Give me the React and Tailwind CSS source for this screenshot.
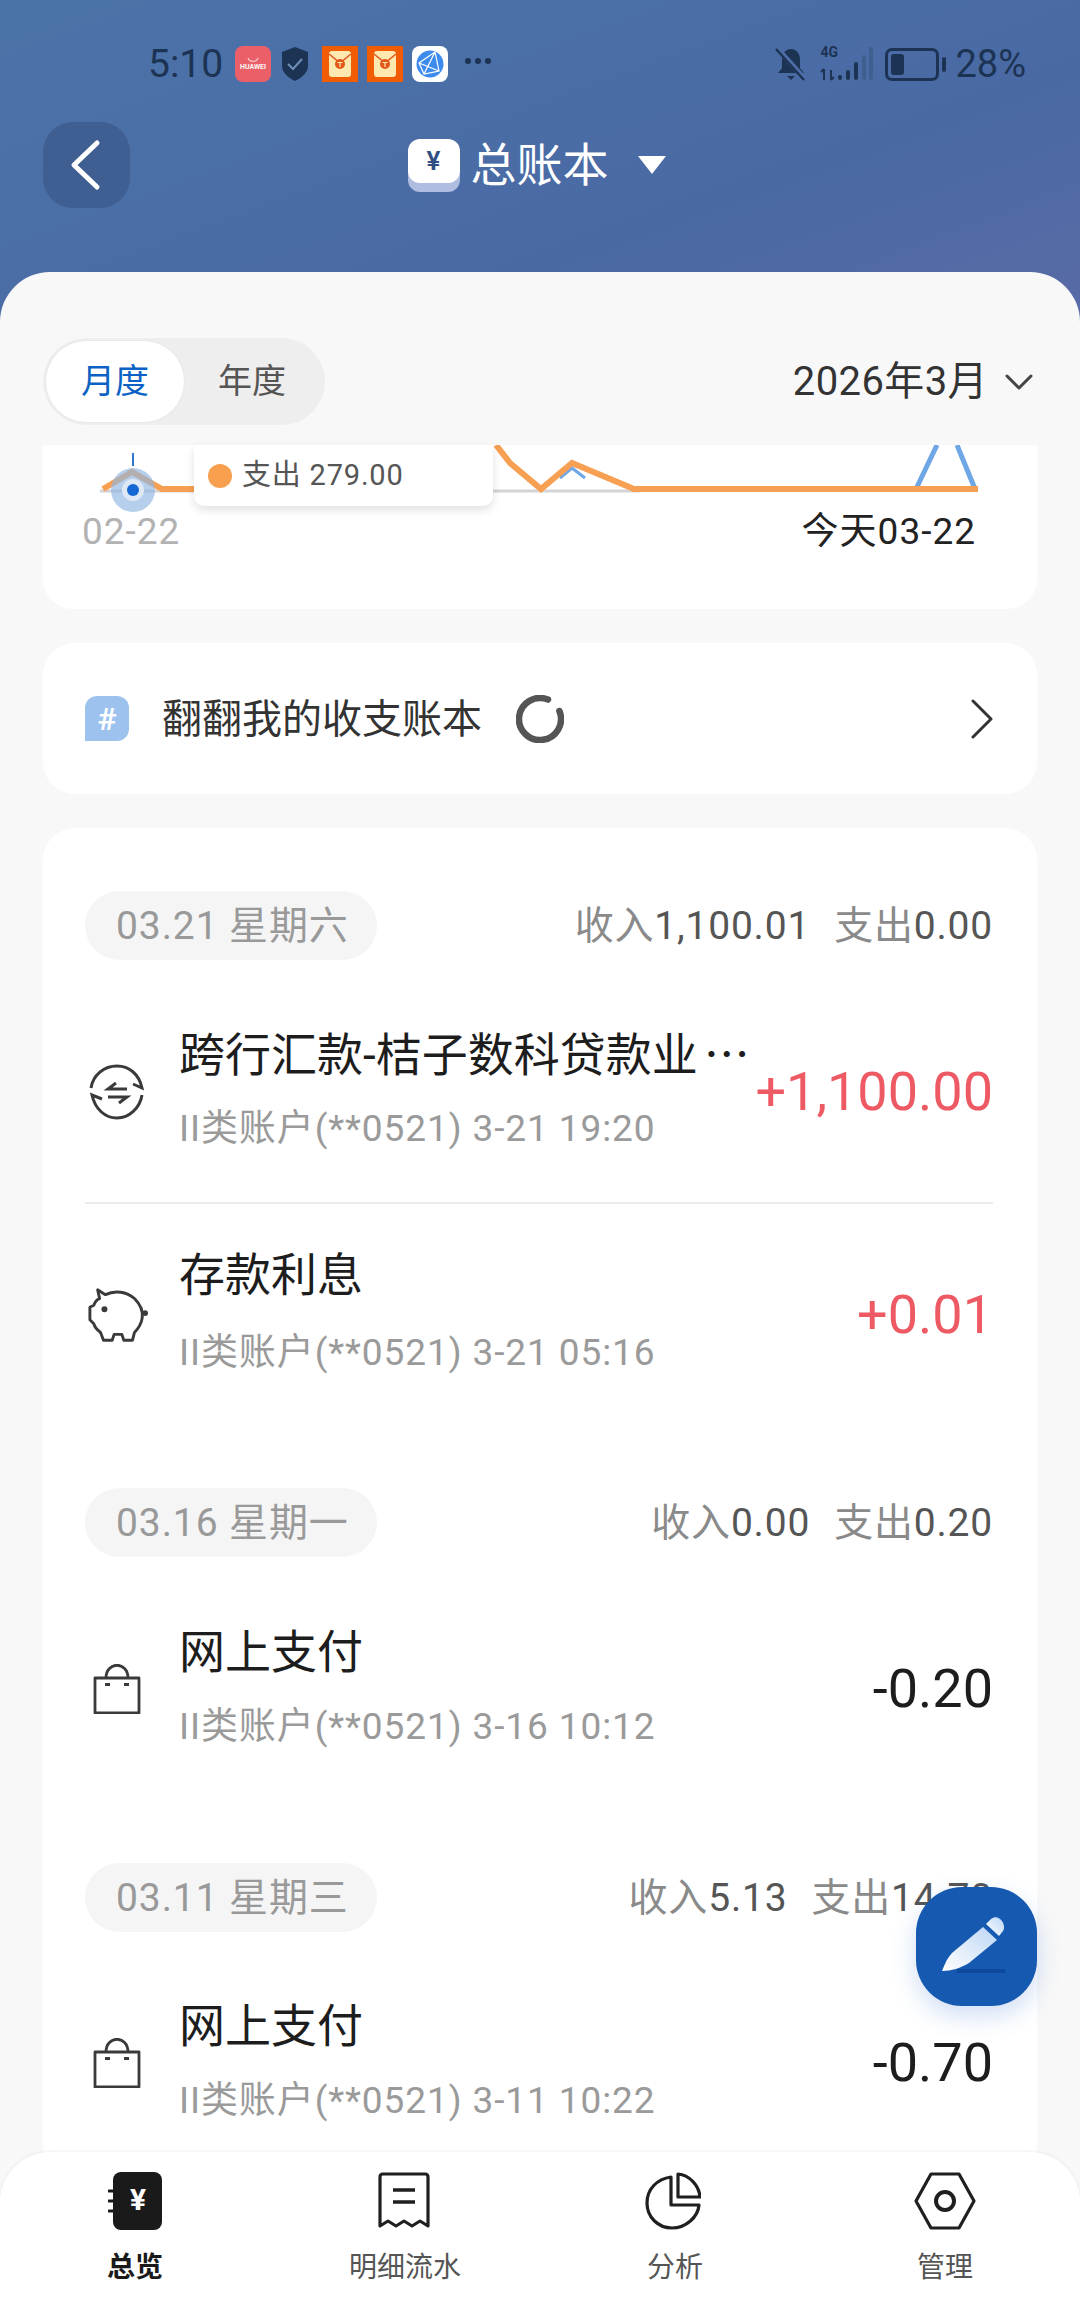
import React from "react";

const FONT = { fontFamily: 'Roboto, "Noto Sans CJK SC", sans-serif' };

function RedPacket() {
  return (
    <svg width="36" height="36" viewBox="0 0 36 36">
      <rect width="36" height="36" fill="#f25c05" />
      <rect x="7" y="5" width="22" height="26" rx="3" fill="#fde9b0" />
      <path d="M7 8 L18 17 L29 8" fill="none" stroke="#e2571a" strokeWidth="1.6" />
      <circle cx="18" cy="18" r="5" fill="#e2571a" />
      <path d="M15.5 16.5h5M18 16.5v4.5" stroke="#fde9b0" strokeWidth="1.2" />
    </svg>
  );
}

function StatusBar() {
  const dark = "#1c3354";
  return (
    <div className="h-[122px] flex items-start justify-between pt-[44px] pl-[148px] pr-[54px]">
      <div className="flex items-center h-[40px]">
        <span className="text-[39px] leading-none w-[87px] text-[#1c3354]">5:10</span>
        <div className="w-[36px] h-[36px] rounded-[8px] bg-[#ea5f68] flex flex-col items-center justify-center mr-[9px]">
          <svg width="14" height="6" viewBox="0 0 14 6"><path d="M2 1c1.5 4.5 8.5 4.5 10 0" fill="none" stroke="#f8c4c8" strokeWidth="1.2" /></svg>
          <span className="text-[7px] leading-[9px] text-white font-semibold">HUAWEI</span>
        </div>
        <svg width="30" height="36" viewBox="0 0 30 36" className="mr-[12px]">
          <path d="M15 1 L28 6 V20 C28 27 21 32 15 35 C9 32 2 27 2 20 V6 Z" fill={dark} />
          <path d="M8 18l5 5 9-10" fill="none" stroke="#6f8fb8" strokeWidth="2" />
        </svg>
        <div className="mr-[9px]"><RedPacket /></div>
        <div className="mr-[9px]"><RedPacket /></div>
        <div className="w-[36px] h-[36px] rounded-[8px] bg-white flex items-center justify-center mr-[17px]">
          <svg width="30" height="30" viewBox="0 0 30 30">
            <circle cx="15" cy="15" r="13.5" fill="#3d8bec" />
            <path d="M4 14 L20 3 L24 22 L9 25 Z M4 14 L24 22 M20 3 L9 25" fill="none" stroke="#fff" strokeWidth="1.2" />
          </svg>
        </div>
        <span className="flex gap-[4px] items-center -mt-[6px]">
          <i className="w-[6px] h-[6px] rounded-full bg-[#1c3354]" />
          <i className="w-[6px] h-[6px] rounded-full bg-[#1c3354]" />
          <i className="w-[6px] h-[6px] rounded-full bg-[#1c3354]" />
        </span>
      </div>
      <div className="flex items-center h-[40px]">
        <svg width="36" height="36" viewBox="0 0 34 36" className="mr-[11px]">
          <path d="M17 3c6 0 9 5 9 11v8l4 5H4l4-5v-8c0-6 3-11 9-11Z" fill={dark} />
          <path d="M13 30h8l-4 4Z" fill={dark} />
          <path d="M3 2 L31 33" stroke="#4c6da5" strokeWidth="5" />
          <path d="M2 3 L30 34" stroke={dark} strokeWidth="2.4" />
        </svg>
        <div className="relative w-[52px] h-[36px] mr-[13px]">
          <span className="absolute left-0 top-[-2px] text-[14px] leading-[16px] font-bold text-[#1c3354]">4G</span>
          <svg width="54" height="36" viewBox="0 0 54 36" className="absolute inset-0">
            <path d="M4 34V23M1 26l3-3M11 24v10M11 34l3-3" stroke={dark} strokeWidth="2" fill="none" />
            <rect x="18" y="29" width="4" height="5" rx="2" fill={dark} />
            <rect x="26" y="24" width="4" height="10" rx="2" fill={dark} />
            <rect x="34" y="16" width="4" height="18" rx="2" fill={dark} />
            <rect x="42" y="9" width="4" height="25" rx="2" fill="#3f5f8f" />
            <rect x="49" y="1" width="4" height="33" rx="2" fill="#3f5f8f" />
          </svg>
        </div>
        <div className="w-[54px] h-[33px] rounded-[7px] border-[3px] border-[#1c3354] p-[3px] mr-[3px]">
          <div className="w-[13px] h-full rounded-[3px] bg-[#1c3354]" />
        </div>
        <div className="w-[4px] h-[15px] rounded-[2px] bg-[#1c3354] mr-[9px]" />
        <span className="text-[38px] leading-none text-[#1c3354]">28%</span>
      </div>
    </div>
  );
}

function TitleBar() {
  return (
    <div className="relative h-[86px] flex items-center justify-center">
      <div className="absolute left-[43px] top-0 w-[87px] h-[86px] rounded-[30px] bg-[#3f5e92] flex items-center justify-center">
        <svg width="34" height="52" viewBox="0 0 34 52" fill="none" stroke="#fff" strokeWidth="5" strokeLinecap="round" strokeLinejoin="round" className="-ml-[4px]">
          <path d="M29 4 L6 26 L29 48" />
        </svg>
      </div>
      <div className="flex items-center -ml-[6px]">
        <div className="relative w-[52px] h-[52px] mr-[11px]">
          <div className="absolute left-0 right-0 top-[6px] bottom-[-1px] rounded-[12px] bg-[#aebde0]" />
          <div className="absolute inset-x-0 top-0 h-[44px] rounded-[12px] bg-white flex items-center justify-center text-[#2f4f82] text-[26px] font-semibold leading-none">
            ¥
          </div>
        </div>
        <span className="text-[46px] leading-none text-white">总账本</span>
        <svg width="30" height="20" viewBox="0 0 30 20" className="ml-[28px]">
          <path d="M1 1h28L15 19Z" fill="#fff" />
        </svg>
      </div>
    </div>
  );
}

function Toolbar() {
  return (
    <div className="flex items-center justify-between pl-[43px] pr-[46px] h-[87px]">
      <div className="relative w-[282px] h-[87px] rounded-full bg-[#eeeeee] flex items-center">
        <div className="w-[140px] h-[83px] ml-[2px] rounded-full bg-white border border-[#e8e8e8] flex items-center justify-center text-[34px] text-[#0b62c4]">
          月度
        </div>
        <div className="flex-1 text-center text-[34px] text-[#555555] pr-[6px]">年度</div>
      </div>
      <div className="flex items-center text-[40px] tracking-[0.4px] text-[#333333]">
        <span>2026年3月</span>
        <svg width="30" height="18" viewBox="0 0 30 18" fill="none" stroke="#444444" strokeWidth="3" strokeLinecap="round" strokeLinejoin="round" className="ml-[16px]">
          <path d="M3 3 L15 15 L27 3" />
        </svg>
      </div>
    </div>
  );
}

function ChartCard() {
  return (
    <div className="relative mx-[43px] mt-[20px] h-[164px] bg-white rounded-b-[30px]">
      <svg width="994" height="70" viewBox="43 445 994 70" className="block">
        <path d="M100 491 H640" stroke="#d4d4d4" strokeWidth="3" />
        <path d="M103 489 L132 472 L162 489 H200" fill="none" stroke="#f7a053" strokeWidth="6" />
        <circle cx="133" cy="490" r="22" fill="#8fb5e2" opacity="0.65" />
        <path d="M133 453V466" stroke="#2f78d0" strokeWidth="2" />
        <path d="M916 489 L937 445 M957 445 L975 489" fill="none" stroke="#6fa6e6" strokeWidth="5" />
        <path d="M560 478 L572 468 L585 478" fill="none" stroke="#6fa6e6" strokeWidth="3" />
        <path
          d="M496 445 L510 463 L541 489 L572 463 L634 489 H978"
          fill="none"
          stroke="#f7a053"
          strokeWidth="6"
        />
        <circle cx="133" cy="490" r="11" fill="#dfe9f5" />
        <circle cx="133" cy="490" r="6" fill="#1568d3" />
      </svg>
      <div className="absolute left-[151px] top-0 w-[299px] h-[61px] bg-white rounded-b-[10px] shadow-[0_4px_10px_rgba(0,0,0,0.12)] flex items-center pl-[14px]">
        <i className="w-[24px] h-[24px] rounded-full bg-[#f9a04e] mr-[10px]" />
        <span className="text-[29px] tracking-[0.8px] leading-none text-[#555555]">支出 279.00</span>
      </div>
      <div className="flex justify-between pl-[39px] pr-[61px] -mt-[3px] text-[37px] tracking-[1px] leading-[40px]">
        <span className="text-[#b3b3b3]">02-22</span>
        <span className="text-[#222222]">今天03-22</span>
      </div>
    </div>
  );
}

function BookCard() {
  return (
    <div className="mx-[43px] mt-[34px] h-[151px] bg-white rounded-[32px] flex items-center pl-[42px] pr-[44px]">
      <div className="w-[44px] h-[45px] rounded-[12px] rounded-bl-none bg-[#9dc2ee] flex items-center justify-center text-white text-[32px] font-semibold leading-none">
        #
      </div>
      <span className="ml-[33px] mt-[2px] text-[40px] text-[#333333]">翻翻我的收支账本</span>
      <svg width="48" height="48" viewBox="0 0 48 48" className="ml-[34px]">
        <path d="M32 4.6 A21 21 0 1 0 43.4 16" fill="none" stroke="#555555" strokeWidth="6.5" strokeLinecap="round" />
      </svg>
      <svg width="22" height="40" viewBox="0 0 22 40" fill="none" stroke="#333333" strokeWidth="3" strokeLinecap="round" strokeLinejoin="round" className="ml-auto">
        <path d="M2 2 L20 20 L2 38" />
      </svg>
    </div>
  );
}

function DateHeader({ date, inAmt, outAmt, top }) {
  return (
    <div className={`flex items-center justify-between h-[69px] ${top}`}>
      <div className="h-[69px] w-[292px] rounded-full bg-[#f5f5f5] pl-[31px] pt-[2px] flex items-center text-[39px] tracking-[0.9px] text-[#999999]">
        {date}
      </div>
      <div className="pt-[2px] text-[39px] tracking-[0.8px] text-[#8a8a8a]">
        收入<span className="text-[#555555]">{inAmt}</span>
        <span className="ml-[24px]">支出</span>
        <span className="text-[#555555]">{outAmt}</span>
      </div>
    </div>
  );
}

function TransferIcon() {
  return (
    <svg width="56" height="56" viewBox="0 0 56 56" fill="none" stroke="#3a3a3a" strokeWidth="3">
      <path d="M2 24 C4 11 15 2 28 2 C40 2 50 10 53 24 L44 20" />
      <path d="M53 31 C51 44 40 54 28 54 C16 54 6 45 3 31 L13 35" />
      <path d="M38 25H19l8-6M19 33h19l-8 6" />
    </svg>
  );
}

function PigIcon() {
  return (
    <svg width="64" height="56" viewBox="0 0 64 56" fill="none" stroke="#3a3a3a" strokeWidth="3" className="ml-[2px]">
      <path
        d="M11 2 L19 7 C29 2 41 4 49 11 C55 17 58 24 57 31 C56 38 52 43 49 46 L47 54 H38 L36 48 H28 L26 54 H17 L14 46 C11 44 8 41 7 37 L3 33 V20 L7 18 C8 15 10 12 13 11 Z"
        strokeLinejoin="round"
      />
      <circle cx="18" cy="22" r="1.6" fill="#3a3a3a" />
      <circle cx="60" cy="26" r="3" fill="#3a3a3a" stroke="none" />
    </svg>
  );
}

function BagIcon() {
  return (
    <svg width="48" height="50" viewBox="0 0 48 50" fill="none" stroke="#3a3a3a" strokeWidth="2.8">
      <path d="M2 14h44v35H2Z" strokeLinejoin="round" />
      <path d="M13 14 C13 -3 35 -3 35 14" />
      <path d="M12 20.5h5M31 20.5h5" />
    </svg>
  );
}

function TxRow({ icon, title, more, lift, height = "h-[222px]", sub, amount, color }) {
  return (
    <div className={`${height} flex items-center`}>
      <div className="w-[94px] shrink-0 flex">
        <div className="w-[64px] flex justify-center">{icon}</div>
      </div>
      <div className="flex-1 min-w-0 flex flex-col gap-[15px]">
        <div
          className={`h-[60px] leading-[60px] text-[46px] text-[#1d1d1d] whitespace-nowrap ${
            lift ? "-mt-[3px] mb-[3px]" : ""
          }`}
        >
          {title}
          {more && <span className="font-['Noto_Sans_CJK_SC'] ml-[6px]">…</span>}
        </div>
        <div className="h-[60px] leading-[60px] text-[37px] tracking-[0.9px] text-[#9a9a9a] whitespace-nowrap">{sub}</div>
      </div>
      <div className={`text-[54px] leading-none font-[450] shrink-0 ${color}`}>{amount}</div>
    </div>
  );
}

function TxCard() {
  return (
    <div className="mx-[43px] mt-[34px] bg-white rounded-t-[32px] pl-[42px] pr-[44px] pt-[63px] pb-[100px]">
      <DateHeader date="03.21 星期六" inAmt="1,100.01" outAmt="0.00" top="mb-[21px]" />
      <TxRow
        icon={<TransferIcon />}
        title="跨行汇款-桔子数科贷款业"
        more
        lift
        height="h-[221px]"
        sub="II类账户(**0521) 3-21 19:20"
        amount="+1,100.00"
        color="text-[#ee5a63]"
      />
      <div className="h-[2px] bg-[#ececec]" />
      <TxRow
        icon={<PigIcon />}
        title="存款利息"
        lift
        sub="II类账户(**0521) 3-21 05:16"
        amount="+0.01"
        color="text-[#ee5a63]"
      />
      <DateHeader date="03.16 星期一" inAmt="0.00" outAmt="0.20" top="mt-[62px] mb-[21px]" />
      <TxRow
        icon={<BagIcon />}
        title="网上支付"
        sub="II类账户(**0521) 3-16 10:12"
        amount="-0.20"
        color="text-[#1d1d1d]"
      />
      <DateHeader date="03.11 星期三" inAmt="5.13" outAmt="14.70" top="mt-[63px] mb-[20px]" />
      <TxRow
        icon={<BagIcon />}
        title="网上支付"
        sub="II类账户(**0521) 3-11 10:22"
        amount="-0.70"
        color="text-[#1d1d1d]"
      />
    </div>
  );
}

function Fab() {
  return (
    <div className="absolute left-[916px] top-[1887px] w-[121px] h-[119px] rounded-[46px] bg-[#1559b1] shadow-[0_10px_24px_rgba(40,110,210,0.22)] flex items-center justify-center">
      <svg width="76" height="64" viewBox="0 0 76 64">
        <defs>
          <linearGradient id="pen" x1="0" y1="1" x2="1" y2="0">
            <stop offset="0" stopColor="#ffffff" />
            <stop offset="1" stopColor="#bcd6f5" />
          </linearGradient>
        </defs>
        <path d="M18 56 H66" stroke="#0c479a" strokeWidth="4" opacity="0.8" />
        <path d="M3 56 C6 48 9 42 13 38 L44 12 L58 25 L30 48 C22 53 12 56 3 56 Z" fill="url(#pen)" />
        <path d="M47 9 L52 4 C56 1 60 2 63 6 C65 9 66 13 64 16 L60 21 Z" fill="url(#pen)" />
      </svg>
    </div>
  );
}

function NavIconBook() {
  return (
    <svg width="54" height="58" viewBox="0 0 54 58">
      <rect x="5" y="0" width="49" height="58" rx="8" fill="#1a1a1a" />
      <path d="M1 19h6M1 29h6M1 39h6" stroke="#1a1a1a" strokeWidth="3" strokeLinecap="round" />
      <text x="30" y="38" textAnchor="middle" fontSize="30" fontWeight="700" fill="#fff" style={FONT}>¥</text>
    </svg>
  );
}

function NavIconReceipt() {
  return (
    <svg width="52" height="58" viewBox="0 0 52 58" fill="none" stroke="#1f1f1f" strokeWidth="3.2" className="-ml-[2px]">
      <path d="M2 54V5c0-2 1-3 3-3h42c2 0 3 1 3 3v49l-8-5-8 5-8-5-8 5-8-5Z" strokeLinejoin="round" />
      <path d="M15 18h22M15 30h22" strokeWidth="3.6" />
    </svg>
  );
}

function NavIconPie() {
  return (
    <svg width="56" height="58" viewBox="0 0 56 58" fill="none" stroke="#1f1f1f" strokeWidth="3.2" className="-ml-[5px]">
      <path d="M26 5 C12 7 2 17 2 31 C2 45 13 56 27 56 C41 56 53 45 54 33 H26 Z" strokeLinejoin="round" />
      <path d="M33 2 C44 3 54 13 55 25 H33 Z" strokeLinejoin="round" />
    </svg>
  );
}

function NavIconHex() {
  return (
    <svg width="62" height="58" viewBox="0 0 62 58" fill="none" stroke="#1f1f1f" strokeWidth="3.2">
      <path d="M17 2H45L60 29L45 56H17L2 29Z" strokeLinejoin="round" />
      <circle cx="31" cy="29" r="9" strokeWidth="4" />
    </svg>
  );
}

function BottomNav() {
  const items = [
    { label: "总览", icon: <NavIconBook />, active: true },
    { label: "明细流水", icon: <NavIconReceipt /> },
    { label: "分析", icon: <NavIconPie /> },
    { label: "管理", icon: <NavIconHex /> },
  ];
  return (
    <div className="absolute left-0 right-0 bottom-0 h-[158px] bg-white rounded-t-[50px] shadow-[0_-1px_3px_rgba(0,0,0,0.06)] grid grid-cols-4 px-0 pt-[20px]">
      {items.map((item) => (
        <div key={item.label} className="flex flex-col items-center">
          <div className="h-[58px] flex items-center">{item.icon}</div>
          <span
            className={`mt-[21px] text-[28px] leading-[34px] ${
              item.active ? "font-bold text-[#1a1a1a]" : "text-[#555555]"
            }`}
          >
            {item.label}
          </span>
        </div>
      ))}
    </div>
  );
}

export default function App() {
  return (
    <div style={FONT} className="relative w-[1080px] h-[2310px] overflow-hidden bg-[#f8f8f8] flex flex-col">
      <div className="h-[322px] shrink-0 bg-[linear-gradient(160deg,#4b74a9_0%,#4a69a4_65%,#586ba6_100%)]">
        <StatusBar />
        <TitleBar />
      </div>
      <div className="-mt-[50px] flex-1 min-h-0 bg-[#f8f8f8] rounded-t-[50px] pt-[66px] overflow-hidden">
        <Toolbar />
        <ChartCard />
        <BookCard />
        <TxCard />
      </div>
      <Fab />
      <BottomNav />
    </div>
  );
}
